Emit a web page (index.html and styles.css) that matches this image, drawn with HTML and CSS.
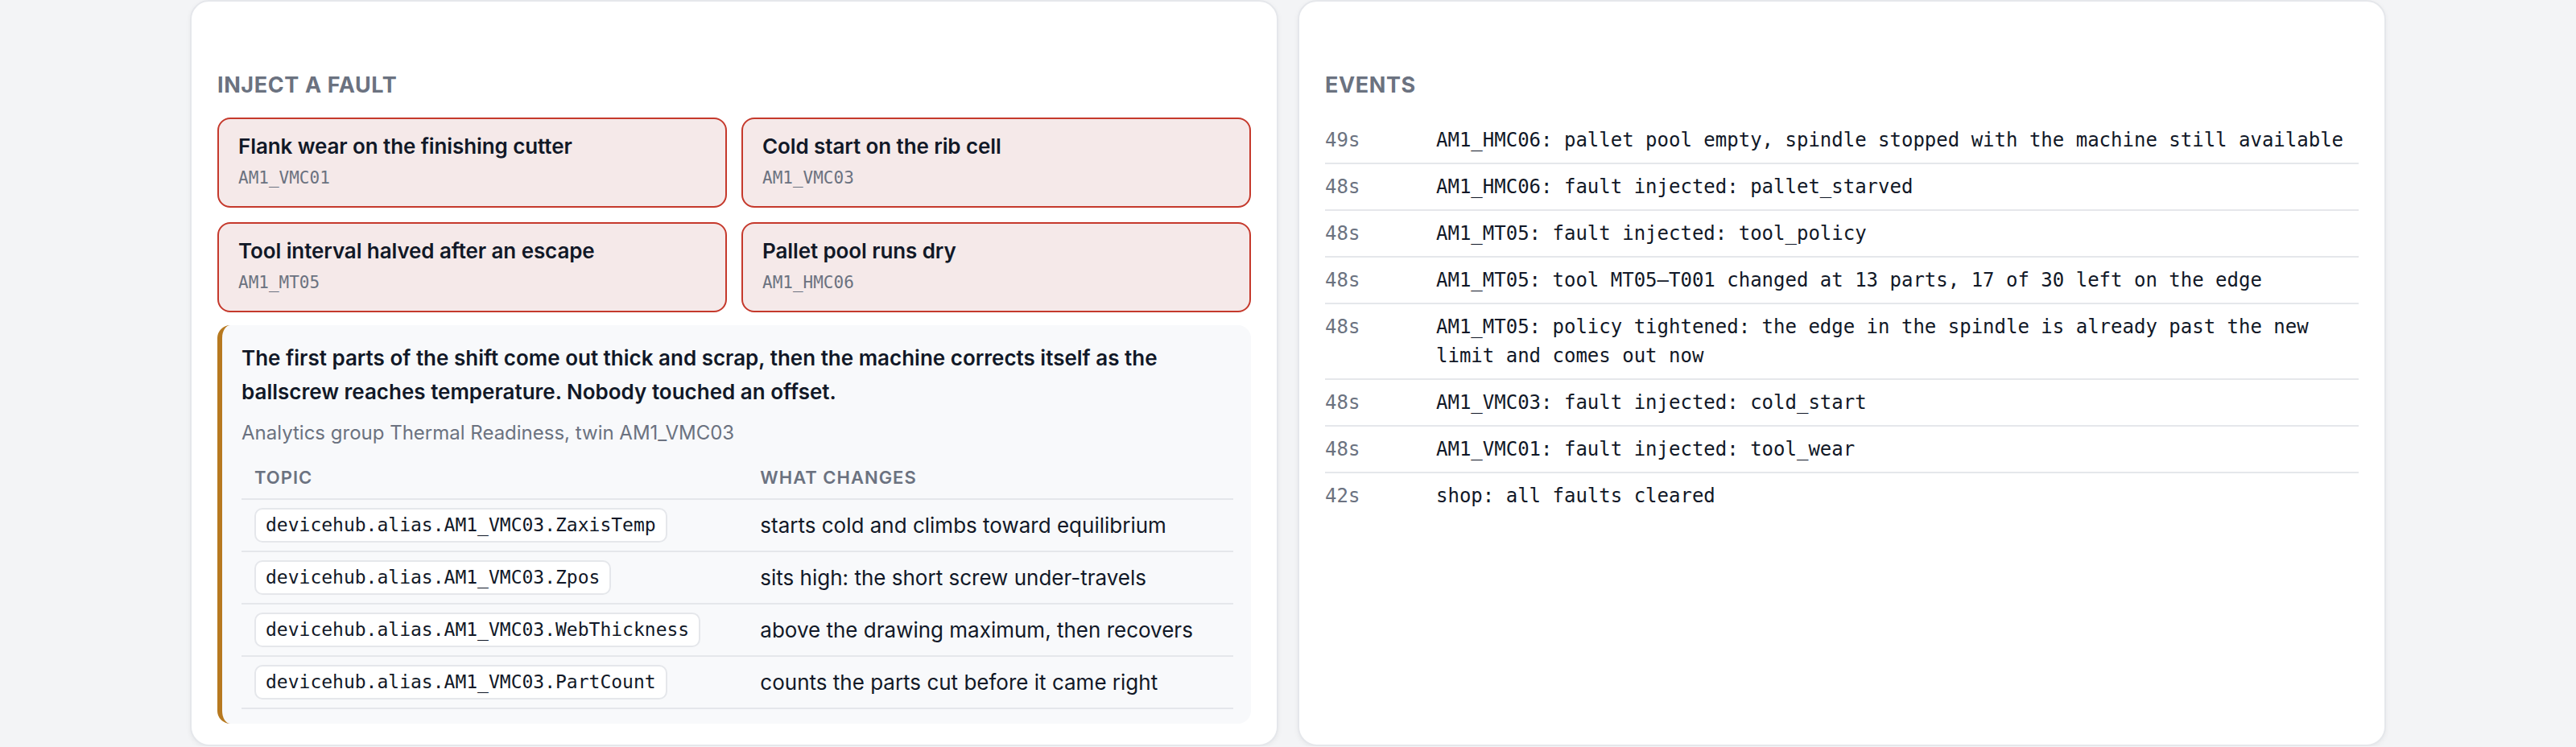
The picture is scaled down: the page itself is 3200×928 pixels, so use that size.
FILE: index.html
```html
<!DOCTYPE html>
<html lang="en">
<head>
    <meta charset="UTF-8">
    <meta name="viewport" content="width=device-width, initial-scale=1.0">
    <title>Shop Floor Faults</title>
    <link rel="stylesheet" href="styles.css">
</head>
<body>
    <main class="panels">
        <section class="panel">
            <h2 class="panel-title">Inject a fault</h2>

            <div class="fault-grid">
                <div class="fault">
                    <div class="fault-name">Flank wear on the finishing cutter</div>
                    <div class="fault-twin">AM1_VMC01</div>
                </div>
                <div class="fault">
                    <div class="fault-name">Cold start on the rib cell</div>
                    <div class="fault-twin">AM1_VMC03</div>
                </div>
                <div class="fault">
                    <div class="fault-name">Tool interval halved after an escape</div>
                    <div class="fault-twin">AM1_MT05</div>
                </div>
                <div class="fault">
                    <div class="fault-name">Pallet pool runs dry</div>
                    <div class="fault-twin">AM1_HMC06</div>
                </div>
            </div>

            <!-- details for the selected fault -->
            <div class="fault-detail">
                <p class="detail-text">The first parts of the shift come out thick and scrap, then the machine corrects itself as the ballscrew reaches temperature. Nobody touched an offset.</p>
                <p class="detail-source">Analytics group Thermal Readiness, twin AM1_VMC03</p>
                <table class="topics">
                    <thead>
                        <tr><th>Topic</th><th>What changes</th></tr>
                    </thead>
                    <tbody>
                        <tr><td><code>devicehub.alias.AM1_VMC03.ZaxisTemp</code></td><td>starts cold and climbs toward equilibrium</td></tr>
                        <tr><td><code>devicehub.alias.AM1_VMC03.Zpos</code></td><td>sits high: the short screw under-travels</td></tr>
                        <tr><td><code>devicehub.alias.AM1_VMC03.WebThickness</code></td><td>above the drawing maximum, then recovers</td></tr>
                        <tr><td><code>devicehub.alias.AM1_VMC03.PartCount</code></td><td>counts the parts cut before it came right</td></tr>
                    </tbody>
                </table>
            </div>
        </section>

        <section class="panel">
            <h2 class="panel-title">Events</h2>
            <ul class="events">
                <li><span class="ago">49s</span><span class="msg">AM1_HMC06: pallet pool empty, spindle stopped with the machine still available</span></li>
                <li><span class="ago">48s</span><span class="msg">AM1_HMC06: fault injected: pallet_starved</span></li>
                <li><span class="ago">48s</span><span class="msg">AM1_MT05: fault injected: tool_policy</span></li>
                <li><span class="ago">48s</span><span class="msg">AM1_MT05: tool MT05–T001 changed at 13 parts, 17 of 30 left on the edge</span></li>
                <li><span class="ago">48s</span><span class="msg">AM1_MT05: policy tightened: the edge in the spindle is already past the new limit and comes out now</span></li>
                <li><span class="ago">48s</span><span class="msg">AM1_VMC03: fault injected: cold_start</span></li>
                <li><span class="ago">48s</span><span class="msg">AM1_VMC01: fault injected: tool_wear</span></li>
                <li><span class="ago">42s</span><span class="msg">shop: all faults cleared</span></li>
            </ul>
        </section>
    </main>
</body>
</html>
```

FILE: styles.css
```css
body {
    margin: 0;
    background-color: #f3f4f6;
    color: #111827;
    font-family: Inter, "Noto Sans", sans-serif;
}
.panels {
    width: 2728px;
    margin: 0 auto;
    display: grid;
    grid-template-columns: 1fr 1fr;
    gap: 24px;
}
.panel {
    background-color: #fff;
    border: 2px solid #e5e7eb;
    border-radius: 24px;
    box-shadow: 0 2px 6px rgba(0, 0, 0, 0.05);
    padding: 86px 32px 26px;
}
.panel-title {
    margin: 0 0 22px;
    font-size: 27px;
    line-height: 36px;
    font-weight: 700;
    letter-spacing: 0.6px;
    text-transform: uppercase;
    color: #6b7280;
}

/* fault buttons */
.fault-grid {
    display: grid;
    grid-template-columns: 1fr 1fr;
    gap: 18px;
}
.fault {
    background-color: #f5e9e9;
    border: 2px solid #c5392c;
    border-radius: 16px;
    padding: 16px 24px 20px;
    cursor: pointer;
}
.fault-name {
    font-size: 26px;
    line-height: 36px;
    font-weight: 600;
    letter-spacing: -0.1px;
}
.fault-twin {
    margin-top: 6px;
    font-family: "DejaVu Sans Mono", monospace;
    font-size: 21px;
    line-height: 30px;
    color: #6b7280;
}

/* selected fault */
.fault-detail {
    margin-top: 16px;
    background-color: #f8f9fb;
    border-left: 6px solid #b7791f;
    border-radius: 16px;
    padding: 20px 22px 18px 24px;
}
.detail-text {
    margin: 0 0 12px;
    font-size: 26px;
    line-height: 42px;
    font-weight: 600;
}
.detail-source {
    margin: 0 0 11px;
    font-size: 24px;
    line-height: 36px;
    color: #6b7280;
}
.topics {
    width: 100%;
    border-collapse: collapse;
}
.topics th {
    text-align: left;
    padding: 10px 16px;
    font-size: 22px;
    line-height: 32px;
    font-weight: 600;
    letter-spacing: 1px;
    text-transform: uppercase;
    color: #6b7280;
    border-bottom: 2px solid #e5e7eb;
}
.topics th:first-child {
    width: 51%;
}
.topics td {
    padding: 10px 16px;
    font-size: 26px;
    line-height: 36px;
    border-bottom: 2px solid #e5e7eb;
}
.topics code {
    display: inline-block;
    font-family: "DejaVu Sans Mono", monospace;
    font-size: 23px;
    line-height: 31px;
    padding: 4px 12px;
    background-color: #fff;
    border: 2px solid #e5e7eb;
    border-radius: 10px;
}

/* event log */
.events {
    list-style: none;
    margin: 0;
    padding: 0;
    font-family: "DejaVu Sans Mono", monospace;
    font-size: 24px;
    line-height: 36px;
}
.events li {
    display: flex;
    padding: 10px 0;
    border-bottom: 2px solid #e5e7eb;
}
.events li:last-child {
    border-bottom: none;
}
.ago {
    flex: 0 0 138px;
    color: #6b7280;
}
.msg {
    flex: 1;
}
```
